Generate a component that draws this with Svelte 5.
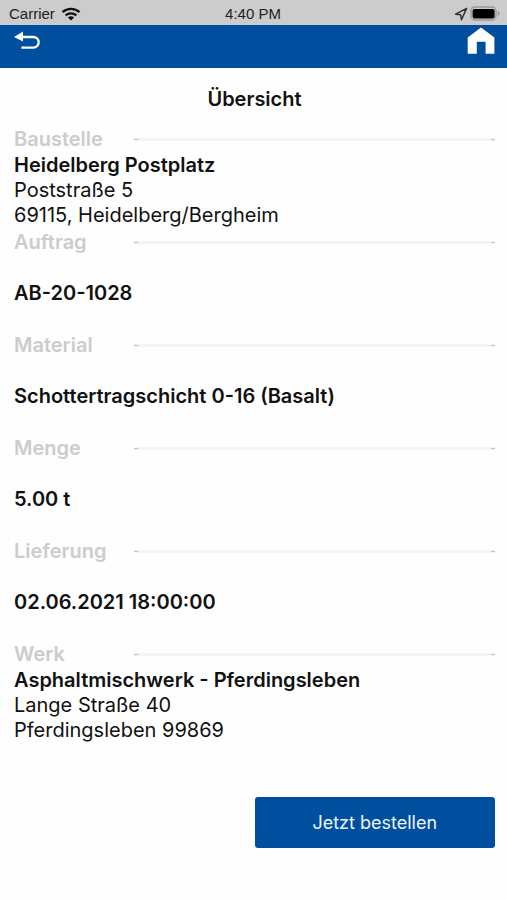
<script>
  const sections = [
    { label: 'Baustelle', title: 'Heidelberg Postplatz', lines: ['Poststraße 5', '69115, Heidelberg/Bergheim'] },
    { label: 'Auftrag', title: 'AB-20-1028', lines: [] },
    { label: 'Material', title: 'Schottertragschicht 0-16 (Basalt)', lines: [] },
    { label: 'Menge', title: '5.00 t', lines: [] },
    { label: 'Lieferung', title: '02.06.2021 18:00:00', lines: [] },
    { label: 'Werk', title: 'Asphaltmischwerk - Pferdingsleben', lines: ['Lange Straße 40', 'Pferdingsleben 99869'] }
  ];
</script>

<div class="screen">
  <div class="status">
    <div class="carrier">
      <span>Carrier</span>
      <svg width="20" height="14" viewBox="0 0 20 14" aria-hidden="true">
        <g fill="none" stroke="#111" stroke-width="2.3">
          <path d="M1.5 5.2C6.2.7 13.8.7 18.5 5.2" />
          <path d="M4.6 8.4c3-2.8 7.8-2.8 10.8 0" />
        </g>
        <path d="M10 13.4 6.9 10.4c1.8-1.5 4.4-1.5 6.2 0Z" fill="#111" />
      </svg>
    </div>
    <span>4:40 PM</span>
    <div class="indicators">
      <svg width="14" height="14" viewBox="0 0 14 14" aria-hidden="true">
        <path d="M12.6 1.4 1.6 7.2l5 .6.9 5Z" fill="none" stroke="#333" stroke-width="1.5" stroke-linejoin="round" />
      </svg>
      <svg width="30" height="15" viewBox="0 0 30 15" aria-hidden="true">
        <rect x="1" y="1" width="25" height="13" rx="4" fill="none" stroke="#999" stroke-width="1.3" />
        <rect x="2.6" y="3" width="22" height="9.4" rx="1.8" fill="#000" />
        <path d="M27.6 5c2.6 1 2.6 4 0 5Z" fill="#999" />
      </svg>
    </div>
  </div>

  <header>
    <button class="icon" aria-label="Zurück">
      <svg width="28" height="20" viewBox="0 0 28 20" aria-hidden="true">
        <path d="M0 6 9 .6v10Z" fill="#fff" />
        <path d="M8 6h11.4a5.2 5.2 0 0 1 0 10.6H7.4" fill="none" stroke="#fff" stroke-width="2.3" />
      </svg>
    </button>
    <button class="icon" aria-label="Startseite">
      <svg width="28" height="28" viewBox="0 0 28 28" aria-hidden="true">
        <path d="M14 .6 27.4 10.6V26.7H18.6V14.8H9.8V26.7H.7V10.6Z" fill="#fff" />
      </svg>
    </button>
  </header>

  <main>
    <h1>Übersicht</h1>
    {#each sections as section}
      <section>
        <div class="heading">
          <h2>{section.label}</h2>
          <span class="rule"></span>
        </div>
        <div class="body">
          <p class="title">{section.title}</p>
          {#each section.lines as line}
            <p>{line}</p>
          {/each}
        </div>
      </section>
    {/each}
    <button class="order">Jetzt bestellen</button>
  </main>
</div>

<style>
  :global(body) {
    margin: 0;
    background: #fefefe;
  }
  .screen {
    font-family: Inter, "Liberation Sans", sans-serif;
    color: #111;
  }
  .status {
    display: grid;
    grid-template-columns: 1fr auto 1fr;
    align-items: center;
    height: 25px;
    padding: 2px 7px 0 6px;
    box-sizing: border-box;
    background: #ccc;
    font-family: "Liberation Sans", Arial, sans-serif;
    font-size: 15px;
    color: #222;
  }
  .carrier,
  .indicators {
    display: flex;
    align-items: center;
    gap: 6px;
  }
  .carrier {
    padding-left: 3px;
  }
  .indicators {
    justify-content: flex-end;
    gap: 2px;
  }
  svg {
    display: block;
  }
  header {
    display: flex;
    justify-content: space-between;
    align-items: flex-start;
    height: 43px;
    padding: 2px 12px 0 14px;
    box-sizing: border-box;
    background: #004f9f;
  }
  button {
    border: 0;
    font: inherit;
    cursor: pointer;
  }
  .icon {
    display: flex;
    align-items: center;
    height: 28px;
    padding: 0;
    background: none;
  }
  main {
    display: flex;
    flex-direction: column;
    padding: 19px 12px 52px 14px;
    font-size: 20px;
  }
  h1,
  h2,
  p {
    margin: 0;
    font-size: 20px;
    line-height: 25px;
    font-weight: 400;
  }
  h1 {
    margin-bottom: 14px;
    text-align: center;
    font-weight: 600;
  }
  .heading {
    display: flex;
    align-items: center;
    height: 26px;
  }
  h2 {
    width: 120px;
    font-weight: 600;
    color: #ccc;
  }
  .rule {
    flex: 1;
    height: 3px;
    box-sizing: border-box;
    border: solid #ccc;
    border-width: 0 4px;
    background: #f4f4f4;
    border-image: linear-gradient(#f4f4f4 33%, #c4c4c4 33% 67%, #f4f4f4 67%) 0 4;
  }
  .body {
    display: flex;
    flex-direction: column;
    justify-content: center;
    height: 77px;
  }
  .title {
    font-weight: 600;
  }
  .order {
    align-self: flex-end;
    width: 50%;
    height: 51px;
    margin-top: 53px;
    padding: 0;
    border-radius: 3px;
    background: #004f9f;
    color: #eef4fb;
    font-size: 18px;
  }
</style>
